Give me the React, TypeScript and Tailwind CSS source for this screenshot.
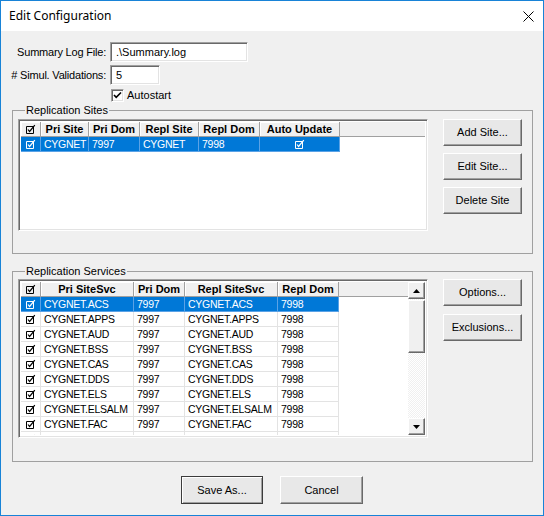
import React from "react";

const Check = ({ className = "" }: { className?: string }) => (
  <svg width="11" height="11" viewBox="0 0 11 11" className={className}>
    <path d="M1.5 2.5h7v7h-7z" fill="none" stroke="currentColor" strokeWidth="1" />
    <path d="M3 5.5l1.6 2L9.8 1.2" fill="none" stroke="currentColor" strokeWidth="1.2" />
  </svg>
);

const Btn = ({ children, w = "w-[79px]", h = "h-[27px]", def = false }: { children: React.ReactNode; w?: string; h?: string; def?: boolean }) => (
  <div
    className={`${w} ${h} flex items-center justify-center bg-[#e8e8e8] ${
      def
        ? "border border-[#3c3c3c] shadow-[inset_1px_1px_0_#fff,inset_-1px_-1px_0_#a0a0a0]"
        : "border border-t-white border-l-white border-b-[#696969] border-r-[#696969] shadow-[inset_-1px_-1px_0_#a0a0a0]"
    }`}
  >
    {children}
  </div>
);

const sitesCols = [
  { name: "", w: "w-[20px]" },
  { name: "Pri Site", w: "w-[48px]" },
  { name: "Pri Dom", w: "w-[51px]" },
  { name: "Repl Site", w: "w-[59px]" },
  { name: "Repl Dom", w: "w-[61px]" },
  { name: "Auto Update", w: "w-[80px]" },
];

const svcCols = [
  { name: "", w: "w-[20px]" },
  { name: "Pri SiteSvc", w: "w-[93px]" },
  { name: "Pri Dom", w: "w-[51px]" },
  { name: "Repl SiteSvc", w: "w-[93px]" },
  { name: "Repl Dom", w: "w-[61px]" },
];

const services = ["ACS", "APPS", "AUD", "BSS", "CAS", "DDS", "ELS", "ELSALM", "FAC", "GNS"];

const HeaderRow = ({ cols }: { cols: { name: string; w: string }[] }) => (
  <div className="flex h-[15px] shrink-0 bg-[#f0f0f0] border-b border-b-[#a0a0a0]">
    {cols.map((c, i) => (
      <div
        key={i}
        className={`${c.w} shrink-0 flex items-center justify-center font-bold text-[11px] border-r border-r-[#a0a0a0] shadow-[inset_1px_1px_0_#fff] leading-none whitespace-nowrap`}
      >
        {i === 0 ? <Check /> : c.name}
      </div>
    ))}
  </div>
);

const DataRow = ({ cols, values, sel, centerLast = false }: { cols: { name: string; w: string }[]; values: string[]; sel?: boolean; centerLast?: boolean }) => (
  <div className="flex h-[15px] shrink-0">
    <div className={`flex ${sel ? "bg-[#0078d7] text-white" : ""}`}>
      {cols.map((c, i) => (
        <div
          key={i}
          className={`${c.w} shrink-0 flex items-center border-r border-b ${
            sel ? "border-[#5aa2e6]" : "border-[#e3e3e3]"
          } ${i === 0 || (centerLast && i === cols.length - 1) ? "justify-center" : "pl-[3px]"} text-[10.5px] tracking-[-0.25px] leading-none whitespace-nowrap overflow-hidden`}
        >
          {i === 0 || (centerLast && i === cols.length - 1) ? <Check /> : values[i]}
        </div>
      ))}
    </div>
  </div>
);

const listBorder =
  "border border-t-[#a0a0a0] border-l-[#a0a0a0] border-b-white border-r-white shadow-[inset_1px_1px_0_#696969,inset_-1px_-1px_0_#e3e3e3]";

const ScrollBtn = ({ up }: { up?: boolean }) => (
  <div className="h-[17px] shrink-0 flex items-center justify-center bg-[#f0f0f0] border border-t-white border-l-white border-b-[#696969] border-r-[#696969] shadow-[inset_-1px_-1px_0_#a0a0a0]">
    <svg width="7" height="4" viewBox="0 0 7 4">
      {up ? <path d="M0 4h7L3.5 0z" fill="#000" /> : <path d="M0 0h7L3.5 4z" fill="#000" />}
    </svg>
  </div>
);

export default function App() {
  return (
    <div className="w-[544px] h-[516px] border border-[#1883d7] bg-[#f0f0f0] flex flex-col font-['Liberation_Sans',Arial,sans-serif] text-[11px] text-black overflow-hidden">
      <div className="h-[30px] shrink-0 bg-white flex items-center justify-between pl-[8px] pr-[9px]">
        <span className="font-['Noto_Sans',sans-serif] text-[12px] pb-[1px]">Edit Configuration</span>
        <svg width="11" height="11" viewBox="0 0 11 11">
          <path d="M0.5 0.5l10 10M10.5 0.5l-10 10" stroke="#000" strokeWidth="1" />
        </svg>
      </div>

      <div className="flex-1 flex flex-col pl-[11px] pr-[10px]">
        <div className="flex items-center mt-[11px] h-[20px]">
          <div className="w-[95px] flex justify-end whitespace-nowrap pr-[1px] tracking-[-0.2px]">Summary Log File:</div>
          <div className={`ml-[3px] w-[138px] h-[20px] bg-white flex items-center pl-[5px] ${listBorder}`}>.\Summary.log</div>
        </div>
        <div className="flex items-center mt-[3px] h-[20px]">
          <div className="w-[95px] flex justify-end whitespace-nowrap pr-[1px] tracking-[-0.2px]">#&nbsp;Simul. Validations:</div>
          <div className={`ml-[3px] w-[50px] h-[20px] bg-white flex items-center pl-[5px] ${listBorder}`}>5</div>
        </div>
        <div className="flex items-center mt-[4px] h-[13px] pl-[99px]">
          <div className={`w-[13px] h-[13px] bg-white flex items-center justify-center ${listBorder}`}>
            <svg width="9" height="9" viewBox="0 0 9 9">
              <path d="M1 4l2.2 2.4L8 1.5" fill="none" stroke="#000" strokeWidth="1.6" />
            </svg>
          </div>
          <span className="ml-[3px]">Autostart</span>
        </div>

        <fieldset className="mt-[2px] border border-[#a0a0a0] pl-[5px] pr-[10px] pt-[2px] pb-[19px] h-[150px]">
          <legend className="ml-[7px] px-[1px] leading-[13px]">Replication Sites</legend>
          <div className="flex justify-between">
            <div className={`w-[410px] h-[112px] bg-white flex flex-col p-[2px] ${listBorder}`}>
              <div className="flex flex-col">
                <div className="flex bg-[#f0f0f0]">
                  <HeaderRow cols={sitesCols} />
                  <div className="flex-1 h-[15px] border-b border-b-[#a0a0a0]" />
                </div>
                <DataRow cols={sitesCols} values={["", "CYGNET", "7997", "CYGNET", "7998", ""]} sel centerLast />
              </div>
            </div>
            <div className="flex flex-col gap-[7px]">
              <Btn>Add Site...</Btn>
              <Btn>Edit Site...</Btn>
              <Btn>Delete Site</Btn>
            </div>
          </div>
        </fieldset>

        <fieldset className="mt-[11px] border border-[#a0a0a0] pl-[5px] pr-[10px] pt-[1px] pb-[19px] h-[197px]">
          <legend className="ml-[7px] px-[1px] leading-[13px]">Replication Services</legend>
          <div className="flex justify-between">
            <div className={`w-[410px] h-[159px] bg-white flex p-[2px] ${listBorder}`}>
              <div className="flex-1 flex flex-col overflow-hidden">
                <div className="flex bg-[#f0f0f0]">
                  <HeaderRow cols={svcCols} />
                  <div className="flex-1 h-[15px] border-b border-b-[#a0a0a0]" />
                </div>
                {services.map((s, i) => (
                  <DataRow key={s} cols={svcCols} values={["", `CYGNET.${s}`, "7997", `CYGNET.${s}`, "7998"]} sel={i === 0} />
                ))}
              </div>
              <div className="w-[17px] flex flex-col bg-[repeating-conic-gradient(#f0f0f0_0_25%,#ffffff_0_50%)] bg-[length:2px_2px]">
                <ScrollBtn up />
                <div className="h-[53px] shrink-0 mt-[1px] bg-[#f0f0f0] border border-t-white border-l-white border-b-[#696969] border-r-[#696969] shadow-[inset_-1px_-1px_0_#a0a0a0]" />
                <div className="flex-1" />
                <ScrollBtn />
              </div>
            </div>
            <div className="flex flex-col gap-[8px]">
              <Btn>Options...</Btn>
              <Btn>Exclusions...</Btn>
            </div>
          </div>
        </fieldset>

        <div className="flex justify-center gap-[17px] mt-[14px] pr-[1px]">
          <Btn w="w-[82px]" h="h-[28px]" def>Save As...</Btn>
          <Btn w="w-[83px]" h="h-[28px]">Cancel</Btn>
        </div>
      </div>
    </div>
  );
}
